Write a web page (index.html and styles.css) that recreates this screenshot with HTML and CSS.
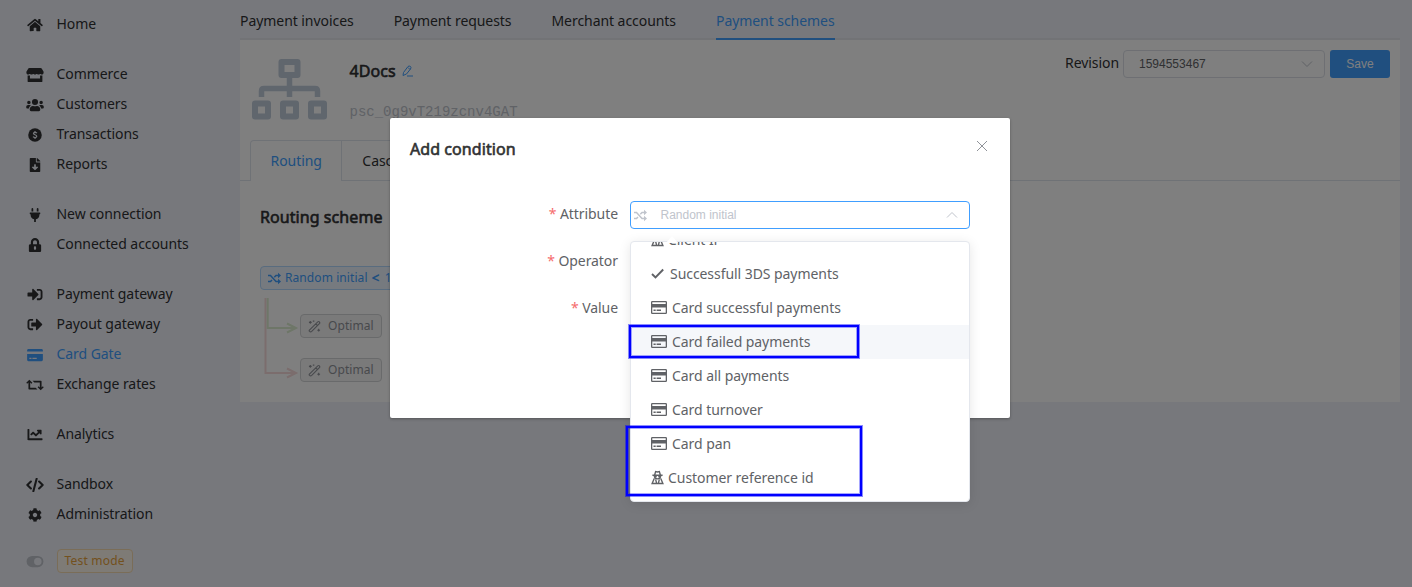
FILE: index.html
```html
<!DOCTYPE html>
<html lang="en">
<head>
<meta charset="utf-8">
<title>Payment schemes</title>
<link rel="stylesheet" href="styles.css">
</head>
<body>
<svg class="defs" aria-hidden="true">
  <symbol id="home" viewBox="0 0 576 512"><path d="M280.4 148.3L96 300.100V464a16 16 0 0 0 16 16l112-.3a16 16 0 0 0 16-16V368a16 16 0 0 1 16-16h64a16 16 0 0 1 16 16v96a16 16 0 0 0 16 16l112 .3a16 16 0 0 0 16-16V300L295.700 148.300a12.200 12.200 0 0 0-15.300 0zM571.600 251.500L488 182.600V44a12 12 0 0 0-12-12h-56a12 12 0 0 0-12 12v72.600L318.500 43a48 48 0 0 0-61 0L4.300 251.500a12 12 0 0 0-1.600 16.900l25.500 31a12 12 0 0 0 16.900 1.600L280.400 107.200a12.200 12.200 0 0 1 15.300 0L531 301a12 12 0 0 0 16.900-1.600l25.500-31a12 12 0 0 0-1.800-16.900z"/></symbol>
  <symbol id="store" viewBox="0 0 640 512"><path d="M75 20Q80 0 115 0H525Q555 0 565 20L635 135C645 210 600 240 575 240C535 240 530 215 512 215C495 215 490 240 448 240C408 240 402 215 384 215C366 215 360 240 320 240C280 240 274 215 256 215C238 215 232 240 192 240C150 240 145 215 128 215C110 215 105 240 65 240C40 240-5 210 5 135zM50 270H135V384H505V270H590V480Q590 512 558 512H82Q50 512 50 480z"/></symbol>
  <symbol id="users" viewBox="0 0 640 512"><path d="M96 224a64 64 0 1 0 0-128 64 64 0 0 0 0 128zm448 0a64 64 0 1 0 0-128 64 64 0 0 0 0 128zm32 32h-64c-17.600 0-33.500 7.100-45.100 18.600 40.300 22.100 68.900 62 75.100 109.400h66c17.700 0 32-14.300 32-32v-32c0-35.300-28.700-64-64-64zm-256 0a112 112 0 1 0 0-224 112 112 0 0 0 0 224zm76.800 32h-8.300c-20.800 10-43.900 16-68.500 16s-47.600-6-68.500-16h-8.300C179.600 288 128 339.600 128 403.200V432c0 26.500 21.500 48 48 48h288c26.500 0 48-21.500 48-48v-28.800c0-63.600-51.600-115.200-115.200-115.200zm-223.700-13.400C161.500 263.100 145.600 256 128 256H64c-35.300 0-64 28.700-64 64v32c0 17.700 14.300 32 32 32h65.900c6.300-47.400 34.900-87.300 75.200-109.400z"/></symbol>
  <symbol id="dollar" viewBox="0 0 512 512"><circle cx="256" cy="256" r="248"/><path class="cut" d="M325 190C300 155 200 145 200 200C200 255 320 240 320 304C320 365 215 360 185 318M256 110V160M256 348V402"/></symbol>
  <symbol id="report" viewBox="0 0 384 512"><path d="M224 136V0H24C10.700 0 0 10.700 0 24v464c0 13.300 10.700 24 24 24h336c13.300 0 24-10.700 24-24V160H248c-13.200 0-24-10.800-24-24zm76.500 211.400l-96.400 95.700c-6.700 6.600-17.400 6.600-24 0l-96.400-95.700C73.400 337.300 80.500 320 94.800 320H160v-80c0-8.800 7.200-16 16-16h32c8.800 0 16 7.200 16 16v80h65.200c14.300 0 21.400 17.300 11.300 27.400zM377 105L279.100 7c-4.500-4.500-10.600-7-17-7H256v128h128v-6.100c0-6.300-2.500-12.400-7-16.900z"/></symbol>
  <symbol id="plug" viewBox="0 0 384 512"><path d="M320 32a32 32 0 0 0-64 0v96h64zm48 128H16A16 16 0 0 0 0 176v32a16 16 0 0 0 16 16h16v32a160.100 160.100 0 0 0 128 156.800V512h64v-99.200A160.100 160.100 0 0 0 352 256v-32h16a16 16 0 0 0 16-16v-32a16 16 0 0 0-16-16zM128 32a32 32 0 0 0-64 0v96h64z"/></symbol>
  <symbol id="lock" viewBox="0 0 448 512"><path fill-rule="evenodd" d="M400 224h-24v-72C376 68.200 307.800 0 224 0S72 68.200 72 152v72H48c-26.500 0-48 21.500-48 48v192c0 26.500 21.500 48 48 48h352c26.500 0 48-21.500 48-48V272c0-26.500-21.500-48-48-48zM264 392c0 22.100-17.900 40-40 40s-40-17.900-40-40v-48c0-22.100 17.900-40 40-40s40 17.900 40 40zm32-168H152v-72c0-39.700 32.300-72 72-72s72 32.300 72 72z"/></symbol>
  <symbol id="in" viewBox="0 0 512 512"><path d="M416 448h-84c-6.600 0-12-5.400-12-12v-40c0-6.600 5.400-12 12-12h84c17.700 0 32-14.300 32-32V160c0-17.700-14.300-32-32-32h-84c-6.600 0-12-5.400-12-12V76c0-6.600 5.400-12 12-12h84c53 0 96 43 96 96v192c0 53-43 96-96 96zm-47-209L201 71c-15-15-41-4.500-41 17v96H24c-13.300 0-24 10.700-24 24v96c0 13.300 10.700 24 24 24h136v96c0 21.500 26 32 41 17l168-168c9.300-9.400 9.300-24.600 0-34z"/></symbol>
  <symbol id="out" viewBox="0 0 512 512"><path d="M497 273L329 441c-15 15-41 4.500-41-17v-96H152c-13.300 0-24-10.700-24-24v-96c0-13.300 10.700-24 24-24h136V88c0-21.400 25.900-32 41-17l168 168c9.300 9.400 9.300 24.600 0 34zM192 436v-40c0-6.600-5.400-12-12-12H96c-17.700 0-32-14.300-32-32V160c0-17.700 14.300-32 32-32h84c6.600 0 12-5.400 12-12V76c0-6.600-5.400-12-12-12H96c-53 0-96 43-96 96v192c0 53 43 96 96 96h84c6.600 0 12-5.400 12-12z"/></symbol>
  <symbol id="card" viewBox="0 0 576 512"><path fill-rule="evenodd" d="M0 432c0 26.500 21.500 48 48 48h480c26.500 0 48-21.500 48-48V216H0zm192-68c0-6.600 5.400-12 12-12h136c6.600 0 12 5.400 12 12v26c0 6.600-5.400 12-12 12H204c-6.600 0-12-5.400-12-12zm-112 0c0-6.600 5.400-12 12-12h56c6.600 0 12 5.400 12 12v26c0 6.600-5.400 12-12 12H92c-6.600 0-12-5.400-12-12zM576 80v48H0V80c0-26.500 21.500-48 48-48h480c26.500 0 48 21.500 48 48z"/></symbol>
  <symbol id="cardline" viewBox="0 0 16 13"><path fill-rule="evenodd" d="M1.300 0H14.700Q16 0 16 1.300V11.700Q16 13 14.700 13H1.300Q0 13 0 11.700V1.300Q0 0 1.300 0zM1.300 1.300V3H14.700V1.300zM1.300 6.500V11.700H14.700V6.500zM2.500 8.500H4.700V10H2.500zM5.600 8.500H10V10H5.600z"/></symbol>
  <symbol id="retweet" viewBox="0 0 640 512"><path d="M0 174L112 62L224 174L190 208L144 162V352H345L409 416H104Q80 416 80 392V162L34 208zM640 338L528 450L416 338L450 304L496 350V160H295L231 96H536Q560 96 560 120V350L606 304z"/></symbol>
  <symbol id="chart" viewBox="0 0 512 512"><path d="M496 384H64V80c0-8.800-7.200-16-16-16H16C7.200 64 0 71.200 0 80v336c0 17.700 14.300 32 32 32h464c8.800 0 16-7.200 16-16v-32c0-8.800-7.200-16-16-16zM464 96H345.900c-21.400 0-32.100 25.900-17 41l32.400 32.400L288 242.700l-73.400-73.400c-12.500-12.500-32.800-12.500-45.200 0l-68.700 68.700c-6.200 6.200-6.200 16.400 0 22.600l22.600 22.600c6.200 6.200 16.400 6.200 22.600 0L192 237.300l73.400 73.400c12.500 12.500 32.800 12.500 45.200 0l96-96 32.400 32.400c15.100 15.100 41 4.400 41-17V112c0-8.800-7.200-16-16-16z"/></symbol>
  <symbol id="code" viewBox="0 0 640 512"><path class="wide" d="M170 130L40 256L170 382M470 130L600 256L470 382M380 30L260 482"/></symbol>
  <symbol id="gear" viewBox="0 0 512 512"><path fill-rule="evenodd" d="M487.400 315.700l-42.600-24.600c4.300-23.200 4.300-47 0-70.200l42.600-24.600c4.900-2.800 7.100-8.600 5.500-14-11.100-35.600-30-67.800-54.700-94.600-3.800-4.100-10-5.100-14.800-2.300L380.800 110c-17.900-15.400-38.500-27.300-60.800-35.100V25.800c0-5.600-3.900-10.500-9.400-11.700-36.700-8.200-74.300-7.800-109.200 0-5.500 1.200-9.400 6.100-9.400 11.700V75c-22.200 7.900-42.800 19.800-60.800 35.100L88.700 85.500c-4.900-2.800-11-1.900-14.800 2.300-24.700 26.700-43.600 58.900-54.700 94.600-1.700 5.400.6 11.200 5.500 14L67.300 221c-4.300 23.200-4.300 47 0 70.200l-42.600 24.600c-4.900 2.800-7.100 8.600-5.500 14 11.100 35.600 30 67.800 54.700 94.600 3.800 4.100 10 5.100 14.800 2.300l42.600-24.600c17.900 15.400 38.500 27.300 60.800 35.100v49.200c0 5.600 3.900 10.500 9.400 11.700 36.700 8.200 74.300 7.800 109.200 0 5.500-1.200 9.400-6.100 9.400-11.700v-49.200c22.200-7.900 42.800-19.800 60.800-35.100l42.600 24.600c4.900 2.800 11 1.900 14.800-2.300 24.700-26.700 43.600-58.900 54.700-94.600 1.500-5.500-.7-11.300-5.600-14.100zM256 336c-44.100 0-80-35.900-80-80s35.900-80 80-80 80 35.900 80 80-35.900 80-80 80z"/></symbol>
  <symbol id="toggle" viewBox="0 0 576 512"><path fill-rule="evenodd" d="M384 64H192a192 192 0 0 0 0 384h192a192 192 0 0 0 0-384zM384 384a128 128 0 1 1 0-256 128 128 0 0 1 0 256z"/></symbol>
  <symbol id="random" viewBox="0 0 13 13"><path class="shuffle" d="M0 3.500H2.500L8 9.500H10.500M0 9.500H2.500L4 7.900M6.300 5.300L8 3.500H10.500"/><path d="M10 .8L13 3.500L10 6.200zM10 6.800L13 9.500L10 12.200z"/></symbol>
  <symbol id="check" viewBox="0 0 13 13"><path class="ticking" d="M1 7L4.500 10.500L12.200 2.500"/></symbol>
  <symbol id="agent" viewBox="0 0 14 16"><path class="fine" d="M4 5L5 1.500L7 2L9 1.500L10 5M1.500 5.500H12.500M3.500 6Q4 9.500 7 9.500Q10 9.500 10.500 6M4 7H6.200M7.800 7H10M3.500 9L1.200 14.500H12.800L10.500 9M5 10L6 14M9 10L8 14"/></symbol>
  <symbol id="wand" viewBox="0 0 14 14"><path class="hair" d="M1.500 11L10.500 2Q12 1 12.500 2.500Q13 3 12.500 3.700L4 12.300Q2.800 13.300 1.600 12.200Q1 11.600 1.500 11zM8.300 4.200L10.300 6.200M2.500 1V4M1 2.500H4M11.500 9.500V12.500M10 11H13M6 .5V2M5.200 1.200H6.800"/></symbol>
</svg>

<div class="app">
  <nav class="sidebar">
    <div class="group"><a class="item"><svg class="ico"><use href="#home"/></svg>Home</a></div>
    <div class="group">
      <a class="item"><svg class="ico"><use href="#store"/></svg>Commerce</a>
      <a class="item"><svg class="ico"><use href="#users"/></svg>Customers</a>
      <a class="item"><svg class="ico"><use href="#dollar"/></svg>Transactions</a>
      <a class="item"><svg class="ico"><use href="#report"/></svg>Reports</a>
    </div>
    <div class="group">
      <a class="item"><svg class="ico"><use href="#plug"/></svg>New connection</a>
      <a class="item"><svg class="ico"><use href="#lock"/></svg>Connected accounts</a>
    </div>
    <div class="group">
      <a class="item"><svg class="ico big"><use href="#in"/></svg>Payment gateway</a>
      <a class="item"><svg class="ico big"><use href="#out"/></svg>Payout gateway</a>
      <a class="item active"><svg class="ico"><use href="#card"/></svg>Card Gate</a>
      <a class="item"><svg class="ico"><use href="#retweet"/></svg>Exchange rates</a>
    </div>
    <div class="group"><a class="item"><svg class="ico big"><use href="#chart"/></svg>Analytics</a></div>
    <div class="group">
      <a class="item"><svg class="ico"><use href="#code"/></svg>Sandbox</a>
      <a class="item"><svg class="ico"><use href="#gear"/></svg>Administration</a>
    </div>
    <div class="mode"><svg class="ico"><use href="#toggle"/></svg><span class="tag warn">Test mode</span></div>
  </nav>

  <main class="main">
    <div class="tabs">
      <a class="tab">Payment invoices</a><a class="tab">Payment requests</a><a class="tab">Merchant accounts</a><a class="tab current">Payment schemes</a>
    </div>
    <section class="card">
      <header class="head">
        <svg class="scheme" viewBox="0 0 75 61"><path d="M29.500 3h16v13h-16zM3 44.500h13v13H3zM31 44.500h13v13H31zM59 44.500h13v13H59z" class="box"/><path class="wire" d="M37.500 18V38M9.500 38V32Q9.500 29.500 12 29.500H63Q65.500 29.500 65.500 32V38"/></svg>
        <div class="ident">
          <h1 class="title">4Docs<svg class="edit" viewBox="0 0 12 12"><path d="M1.500 7.500L6 1.500Q7 .5 8.500 1.500Q9.500 2.500 8.500 4L4.500 9L1 10.500zM6 2.500L8 4.500M5 11H11"/></svg></h1>
          <div class="token">psc_0g9vT219zcnv4GAT</div>
        </div>
        <div class="revision">
          <span>Revision</span>
          <div class="select">1594553467<svg class="chev" viewBox="0 0 12 12"><path d="M1 3.500L6 8.500L11 3.500"/></svg></div>
          <button class="save">Save</button>
        </div>
      </header>
      <div class="subtabs"><a class="subtab on">Routing</a><a class="subtab">Cascading</a></div>
      <h2 class="title routing">Routing scheme</h2>
      <div class="cond"><span class="tag info"><svg class="tico"><use href="#random"/></svg>Random initial<b>&lt;</b>10</span></div>
      <div class="tree">
        <svg class="arrows" viewBox="0 0 40 90"><path class="no" d="M5.500 0V75H35M27 70.500L36 75L27 79.500"/><path class="yes" d="M7.700 0V30H35M27 25.500L36 30L27 34.500"/></svg>
        <div class="leaves">
          <span class="tag plain"><svg class="tico"><use href="#wand"/></svg>Optimal</span>
          <span class="tag plain"><svg class="tico"><use href="#wand"/></svg>Optimal</span>
        </div>
      </div>
    </section>
  </main>
</div>

<div class="overlay">
  <div class="dialog">
    <div class="dhead"><h2 class="title">Add condition</h2><svg class="close" viewBox="0 0 12 12"><path d="M1 1L11 11M11 1L1 11"/></svg></div>
    <div class="field"><label><i>*</i> Attribute</label>
      <div class="input"><svg class="pre"><use href="#random"/></svg>Random initial<svg class="chev" viewBox="0 0 12 12"><path d="M1 8.500L6 3.500L11 8.500"/></svg></div></div>
    <div class="field"><label><i>*</i> Operator</label></div>
    <div class="field"><label><i>*</i> Value</label></div>
  </div>
</div>

<div class="menu">
  <div class="view">
    <div class="option"><svg class="person"><use href="#agent"/></svg>Client IP</div>
    <div class="option"><svg class="tick"><use href="#check"/></svg>Successfull 3DS payments</div>
    <div class="option"><svg class="cc"><use href="#cardline"/></svg>Card successful payments</div>
    <div class="option hover"><svg class="cc"><use href="#cardline"/></svg>Card failed payments</div>
    <div class="option"><svg class="cc"><use href="#cardline"/></svg>Card all payments</div>
    <div class="option"><svg class="cc"><use href="#cardline"/></svg>Card turnover</div>
    <div class="option"><svg class="cc"><use href="#cardline"/></svg>Card pan</div>
    <div class="option"><svg class="person"><use href="#agent"/></svg>Customer reference id</div>
  </div>
  <svg class="nib" viewBox="0 0 12 7"><path d="M0 7L6 0L12 7z"/></svg>
</div>
<div class="mark first"></div>
<div class="mark second"></div>
</body>
</html>
```
FILE: styles.css
```css
* { box-sizing: border-box; }
body { margin: 0; height: 587px; overflow: hidden; background: #eef1f9; color: #303133; font: 14px/20px "Noto Sans", sans-serif; letter-spacing: -.06px; }
svg { fill: currentColor; flex: none; }
.defs { position: absolute; width: 0; height: 0; }
.app { display: flex; height: 587px; }
.sidebar { width: 240px; padding: 9px 0 0 22.5px; }
.group { margin-bottom: 20px; }
.item { display: flex; align-items: center; height: 30px; gap: 10px; }
.item, .mode { white-space: nowrap; }
.ico { width: 24px; height: 14px; margin-top: 1px; }
.item .big { height: 15px; }
.active { color: #409eff; }
.cut { fill: none; stroke: #eef1f9; stroke-width: 46; }
.wide { fill: none; stroke: currentColor; stroke-width: 76; stroke-linecap: round; stroke-linejoin: round; }
.fine { fill: none; stroke: currentColor; stroke-width: 1.5; }
.hair { fill: none; stroke: currentColor; stroke-width: 1.2; }
.shuffle { fill: none; stroke: currentColor; stroke-width: 1.5; }
.ticking { fill: none; stroke: currentColor; stroke-width: 1.9; }
.mode { display: flex; align-items: center; gap: 10px; color: #c0c4cc; }
.mode .ico { height: 15px; }
.tag { display: inline-flex; align-items: center; height: 24px; padding: 0 7px; border: 1px solid; border-radius: 4px; font-size: 12px; letter-spacing: .08px; white-space: pre; }
.tag b { margin: 0 5px 0 4px; font-size: 14px; }
.warn { color: #e6a23c; background: #fdf6ec; border-color: #f5dab1; letter-spacing: .2px; }
.info { color: #409eff; background: #ecf5ff; border-color: #b3d8ff; }
.plain { color: #909399; background: #f4f4f5; border-color: #d3d4d6; }
.main { width: 1160px; }
.tabs { display: flex; gap: 40px; height: 40px; border-bottom: 2px solid #e4e7ed; }
.tab { height: 40px; line-height: 41px; }
.current { color: #409eff; border-bottom: 2px solid #409eff; }
.card { height: 362px; background: #fff; }
.head { display: flex; height: 100px; padding: 10px 10px 0 12px; }
.scheme { width: 75px; height: 61px; margin-top: 9px; }
.box { fill: none; stroke: #c0ccda; stroke-width: 6; stroke-linejoin: round; }
.wire { fill: none; stroke: #c0ccda; stroke-width: 5.500; }
.title { margin: 0; font-size: 16px; line-height: 24px; font-weight: 400; letter-spacing: .07px; -webkit-text-stroke: .6px currentColor; }
.ident { margin-left: 22.5px; flex: 1; padding-top: 9px; }
.edit { width: 12px; height: 12px; margin-left: 6px; fill: none; stroke: #409eff; }
.token { margin-top: 19px; color: #c0c4cc; font: 14px/20px "Liberation Mono", monospace; letter-spacing: 0; }
.revision { display: flex; gap: 5px; height: 28px; line-height: 26px; }
.revision > span { margin-right: -1px; }
.select { display: flex; align-items: center; justify-content: space-between; width: 202px; padding: 0 11px 0 15px; border: 1px solid #dcdfe6; border-radius: 4px; color: #606266; font: 12px "Liberation Sans", sans-serif; letter-spacing: 0; }
.chev { width: 12px; height: 12px; fill: none; stroke: #c0c4cc; }
.save { width: 60px; height: 28px; border: 0; border-radius: 3px; background: #409eff; color: #fff; font: 12px "Liberation Sans", sans-serif; }
.subtabs { display: flex; height: 41px; padding-left: 10px; background: linear-gradient(#dfe4ed, #dfe4ed) bottom / 100% 1px no-repeat; }
.subtab { padding: 0 20px; line-height: 40px; border-top: 1px solid #dfe4ed; border-right: 1px solid #dfe4ed; }
.on { padding: 0 19.5px; color: #409eff; background: #fff; border-left: 1px solid #dfe4ed; border-radius: 4px 0 0; }
.routing { margin: 24px 20px 0; }
.cond { padding: 37px 20px 0; display: flex; }
.tico { width: 13px; height: 13px; margin-right: 4px; }
.plain .tico { margin-right: 7px; }
.tree { display: flex; padding: 8px 20px 0; }
.arrows { width: 40px; height: 90px; fill: none; stroke-width: 2; }
.arrows path { fill: none; }
.yes { stroke: #dcedd0; }
.no { stroke: #f6dada; }
.leaves { display: flex; flex-direction: column; gap: 20px; padding-top: 16px; }
.leaves .tag { width: 82px; }
.overlay { position: absolute; inset: 0; padding: 118px 0 0 390px; background: rgba(0,0,0,.5); }
.dialog { width: 620px; height: 300px; padding: 19px 20px; border-radius: 2px; background: #fff; box-shadow: 0 1px 3px rgba(0,0,0,.3); }
.dhead { display: flex; justify-content: space-between; align-items: center; height: 24px; margin-bottom: 40px; }
.close { width: 12px; height: 12px; margin: 0 2.500px 6px; fill: none; stroke: #909399; }
.field { display: flex; height: 28px; margin-bottom: 19px; line-height: 25px; color: #606266; }
.field label { width: 208px; margin-right: 12px; text-align: right; }
.field i { color: #f56c6c; font-style: normal; }
.input { display: flex; align-items: center; width: 340px; padding: 0 11px 0 3px; border: 1px solid #409eff; border-radius: 4px; color: #c0c4cc; font: 12px "Liberation Sans", sans-serif; letter-spacing: 0; }
.pre { width: 13px; height: 13px; margin-right: 13.5px; }
.input .chev { margin-left: auto; }
.menu { position: absolute; left: 630px; top: 241px; width: 340px; height: 261px; border: 1px solid #e4e7ed; border-radius: 4px; background: #fff; color: #606266; box-shadow: 0 2px 12px rgba(0,0,0,.1); }
.view { display: flex; flex-direction: column; justify-content: flex-end; height: 253px; overflow: hidden; }
.option { display: flex; flex: none; align-items: center; height: 34px; padding: 0 20px 1px; }
.hover { background: #f5f7fa; }
.cc { width: 16px; height: 13px; margin: 0 5px 0 0; }
.tick { width: 13px; height: 13px; margin-right: 6px; }
.person { width: 13px; height: 15px; margin-right: 4px; }
.nib { position: absolute; left: 35px; top: -6px; width: 12px; height: 7px; fill: #fff; }
.mark { position: absolute; border: 2px solid #00f; box-shadow: 0 0 0 1px rgba(0,0,255,.45), inset 0 0 0 1px rgba(0,0,255,.35); }
.first { left: 629px; top: 325px; width: 230px; height: 33px; }
.second { left: 626px; top: 426px; width: 236px; height: 70px; }
```
